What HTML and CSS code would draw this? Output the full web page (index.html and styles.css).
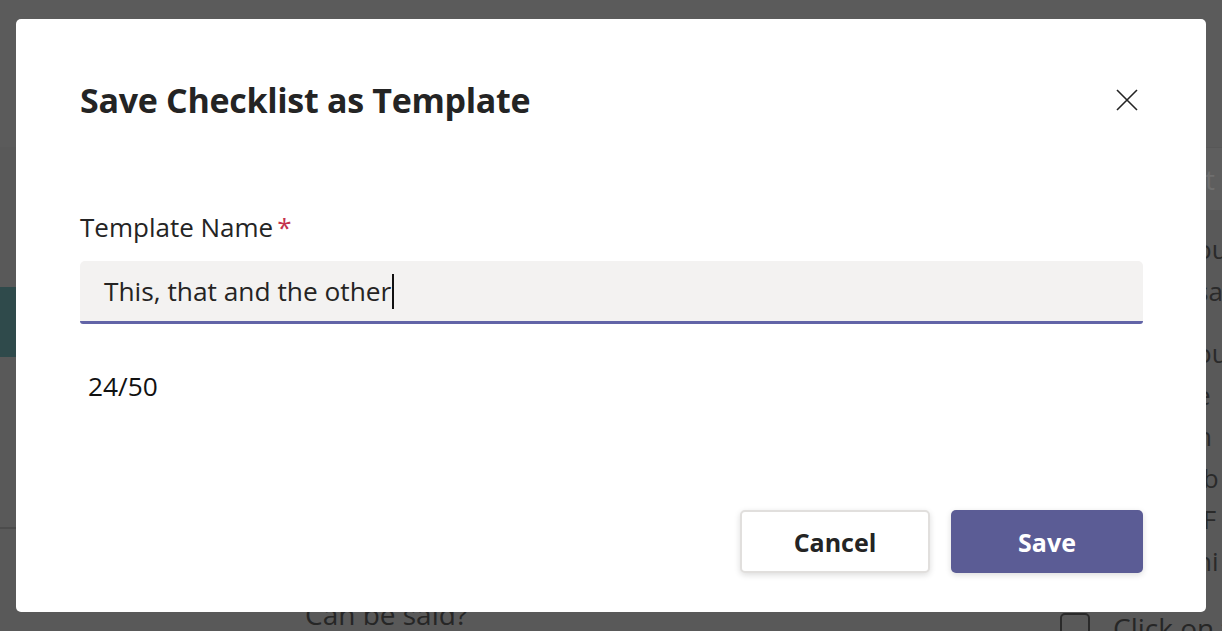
FILE: index.html
```html
<!DOCTYPE html>
<html lang="en">
<head>
<meta charset="utf-8">
<title>Save Checklist as Template</title>
<link rel="stylesheet" href="styles.css">
</head>
<body>
<div class="page">
  <div class="page-top"></div>
  <div class="page-main">
    <div class="col-left">
      <div class="teal-band"></div>
      <div class="left-rule"></div>
    </div>
    <div class="col-center">
      <div class="question">Can be said?</div>
    </div>
    <div class="col-right">
      <div class="right-head">it</div>
      <div class="right-text">
        <p class="para"><span>ou</span><span>sa</span></p>
        <p class="para"><span>ou</span><span>e</span><span>h</span><span>&nbsp;b</span><span>&nbsp;F</span><span>ni</span></p>
      </div>
      <div class="check-row"><span class="checkbox"></span><span class="check-text">Click on the</span></div>
    </div>
  </div>
</div>

<div class="dialog" role="dialog" aria-labelledby="dlg-title">
  <div class="dialog-header">
    <h1 id="dlg-title" class="dialog-title">Save Checklist as Template</h1>
    <button class="close-btn" aria-label="Close">
      <svg width="22" height="22" viewBox="0 0 22 22" aria-hidden="true"><path d="M1 1 L21 21 M21 1 L1 21" stroke="#242424" stroke-width="1.6" fill="none"/></svg>
    </button>
  </div>
  <label class="field-label">Template Name<span class="req">*</span></label>
  <div class="text-input">This, that and the other<span class="caret"></span></div>
  <div class="counter">24/50</div>
  <div class="actions">
    <button class="btn btn-secondary">Cancel</button>
    <button class="btn btn-primary">Save</button>
  </div>
</div>
</body>
</html>
```

FILE: styles.css
```css
* { box-sizing: border-box; }
html, body {
  margin: 0;
  padding: 0;
  width: 1222px;
  height: 631px;
  overflow: hidden;
  background: #595959;
  font-family: "Open Sans", "Noto Sans", "Liberation Sans", sans-serif;
}

/* dimmed page behind the dialog */
.page { width: 1222px; height: 631px; display: flex; flex-direction: column; }
.page-top { height: 147px; background: #5b5b5b; flex: none; }
.page-main { height: 484px; display: flex; flex: none; }
.col-left { width: 200px; padding-top: 140px; }
.teal-band { height: 70px; background: #2f4a4b; }
.left-rule { margin-top: 170px; height: 2px; background: #4c4c4c; }
.col-center { flex: 1; padding: 450px 0 0 105px; }
.question { font-size: 28px; color: #262626; line-height: 34px; }
.col-right { width: 170px; display: flex; flex-direction: column; }
.right-head {
  height: 63px; flex: none; background: #5e5e5e; border-top: 1px solid #575757;
  font-size: 28px; color: #6f6f6f; line-height: 62px; padding-left: 146px;
}
.right-text { padding-left: 144px; font-size: 26px; color: #2a2a2a; height: 402px; flex: none; overflow: hidden; }
.para { margin: 19px 0 0; line-height: 41.5px; }
.para span { display: block; white-space: nowrap; }
.para + .para { margin-top: 21px; }
.check-row { display: flex; align-items: flex-start; gap: 23px; padding-left: 8px; height: 19px; flex: none; font-size: 28px; color: #262626; line-height: 34px; }
.checkbox { width: 30px; height: 30px; border: 2px solid #2a2a2a; border-radius: 5px; margin-top: 1px; flex: none; }
.check-text { margin-top: -1px; white-space: nowrap; }

/* dialog */
.dialog {
  position: absolute;
  left: 16px;
  top: 19px;
  width: 1190px;
  height: 593px;
  background: #fff;
  border-radius: 5px;
  padding: 59px 63px 39px 64px;
  display: flex;
  flex-direction: column;
}
.dialog-header { display: flex; justify-content: space-between; align-items: center; height: 44px; }
.dialog-title { margin: 0; font-size: 34px; font-weight: 700; letter-spacing: -0.3px; color: #242424; line-height: 44px; }
.close-btn {
  width: 32px; height: 32px; padding: 0; border: 0; background: transparent;
  display: flex; align-items: center; justify-content: center;
}
.field-label { margin-top: 88px; font-size: 26px; color: #242424; line-height: 34px; display: block; }
.req { color: #c4314b; margin-left: 4px; }
.text-input {
  margin-top: 17px;
  height: 63px;
  background: #f3f2f1;
  border-bottom: 3px solid #6264a7;
  border-radius: 5px 5px 3px 3px;
  padding-left: 24px;
  font-size: 26.3px;
  color: #252423;
  display: flex;
  align-items: center;
}
.caret { display: inline-block; width: 2px; height: 35px; background: #111; margin-left: 1px; }
.counter { margin-top: 45px; padding-left: 8px; font-size: 26.3px; color: #111; line-height: 34px; }
.actions { margin-top: auto; display: flex; justify-content: flex-end; gap: 21px; }
.btn {
  height: 63px; border-radius: 5px; font-family: inherit; font-size: 25px; font-weight: 700;
  box-shadow: 0 2px 6px rgba(0,0,0,0.14);
}
.btn-secondary { width: 190px; background: #fff; border: 2px solid #e1dfdd; color: #242424; }
.btn-primary { width: 192px; background: #5b5c95; border: 0; color: #fff; }
```
